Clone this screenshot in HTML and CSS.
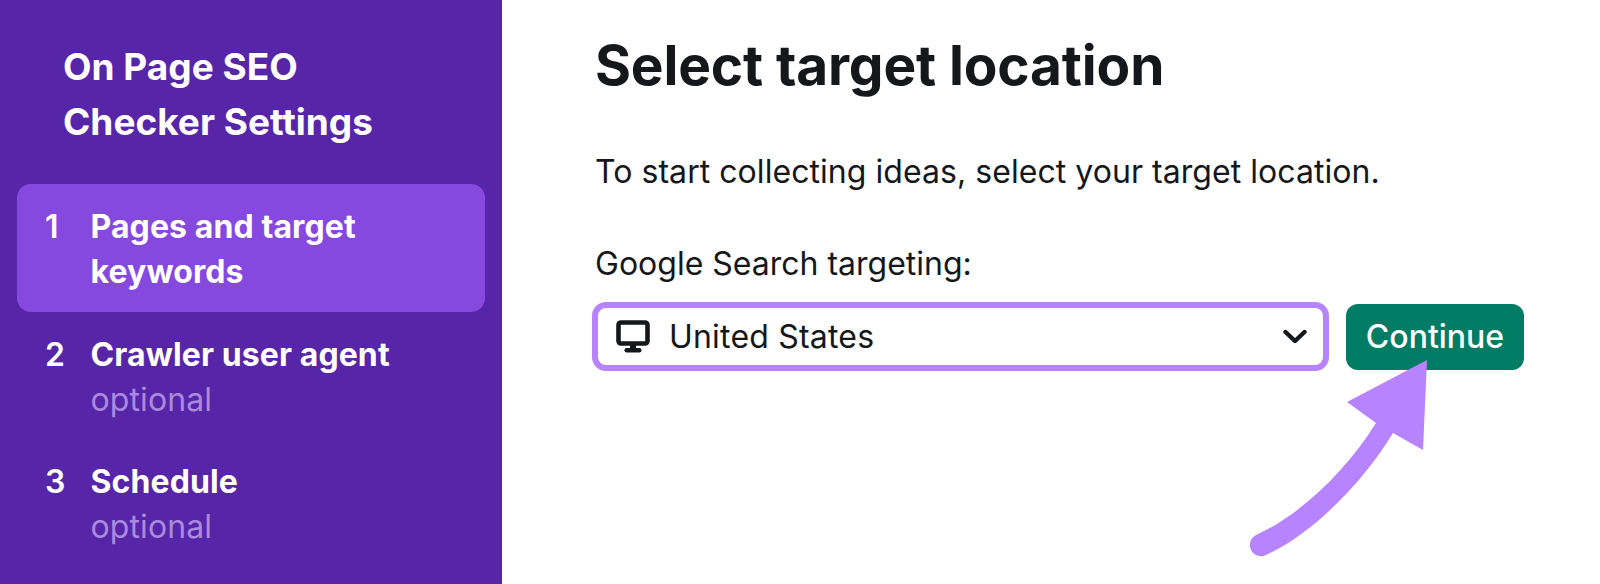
FILE: index.html
```html
<!DOCTYPE html>
<html lang="en">
<head>
<meta charset="utf-8">
<title>On Page SEO Checker Settings</title>
<link rel="stylesheet" href="styles.css">
</head>
<body>
<div class="page">
  <aside class="sidebar">
    <h2 class="side-title">On Page SEO<br>Checker Settings</h2>
    <ol class="steps">
      <li class="step active"><span class="num">1</span><div class="step-body"><div class="label">Pages and target keywords</div></div></li>
      <li class="step"><span class="num">2</span><div class="step-body"><div class="label">Crawler user agent</div><div class="opt">optional</div></div></li>
      <li class="step"><span class="num">3</span><div class="step-body"><div class="label">Schedule</div><div class="opt">optional</div></div></li>
    </ol>
  </aside>
  <main class="content">
    <h1 class="title">Select target location</h1>
    <p class="intro">To start collecting ideas, select your target location.</p>
    <div class="field-label">Google Search targeting:</div>
    <div class="row">
      <div class="select">
        <svg class="monitor" width="34" height="34" viewBox="0 0 34 34"><rect x="2.500" y="2.500" width="29" height="21" rx="2.500" fill="none" stroke="#16171b" stroke-width="4.600"/><rect x="14" y="24" width="6" height="5" fill="#16171b"/><rect x="8.500" y="28" width="17" height="4.500" rx="2.200" fill="#16171b"/></svg>
        <span class="select-value">United States</span>
        <svg class="chev" width="24" height="16" viewBox="0 0 24 16"><path d="M2.500 3 L12 12 L21.500 3" fill="none" stroke="#16171b" stroke-width="4.400" stroke-linecap="round" stroke-linejoin="round"/></svg>
      </div>
      <button class="btn">Continue</button>
    </div>
  </main>
  <svg class="arrow" width="1600" height="584" viewBox="0 0 1600 584"><path d="M1256 535 C1297 517 1345 473 1376 423 L1347 402 L1427 360 L1423 450 L1393 433 C1362 484 1312 534 1266 555 A11 11 0 0 1 1256 535 Z" fill="#b783ff"/></svg>
</div>
</body>
</html>
```

FILE: styles.css
```css
* { box-sizing: border-box; }
html, body { margin: 0; padding: 0; height: 584px; overflow: hidden; background: #fff; }
body { font-family: "Inter", "Liberation Sans", sans-serif; color: #16171b; }
.page { position: relative; display: flex; width: 1600px; height: 584px; }
.sidebar { width: 502px; flex: none; background: #5725a8; color: #fff; padding: 39px 17px 0 17px; }
.side-title { margin: 0 0 35px 46px; font-size: 37px; line-height: 55px; font-weight: 700; }
.steps { list-style: none; margin: 0; padding: 0; }
.step { display: flex; padding: 20px 28px 17px; border-radius: 14px; min-height: 127px; font-size: 32px; line-height: 45px; }
.step.active { background: #8549e0; min-height: 128px; }
.num { width: 45.5px; flex: none; font-weight: 600; }
.label { font-weight: 700; letter-spacing: 0.1px; }
.opt { color: #a88ade; font-weight: 400; letter-spacing: 0.1px; }
.content { flex: 1; padding: 27px 0 0 93px; }
.title { margin: 0; font-size: 55px; line-height: 76px; font-weight: 700; letter-spacing: -0.15px; }
.intro { margin: 49px 0 0; font-size: 32px; line-height: 40px; letter-spacing: 0.05px; }
.field-label { margin-top: 52px; font-size: 32px; line-height: 40px; }
.row { display: flex; align-items: center; gap: 17px; margin-top: 18px; margin-left: -3px; }
.select { display: flex; align-items: center; width: 737px; height: 69px; border: 6px solid #b783ff; border-radius: 14px; padding: 0 16px 0 18px; background: #fff; }
.select-value { flex: 1; margin-left: 19px; font-size: 32px; letter-spacing: 0.2px; }
.btn { width: 178px; height: 66px; border: 0; border-radius: 12px; background: #007c65; color: #fff; font: 500 32px "Inter", sans-serif; padding: 0; }
.arrow { position: absolute; left: 0; top: 0; pointer-events: none; }
```
